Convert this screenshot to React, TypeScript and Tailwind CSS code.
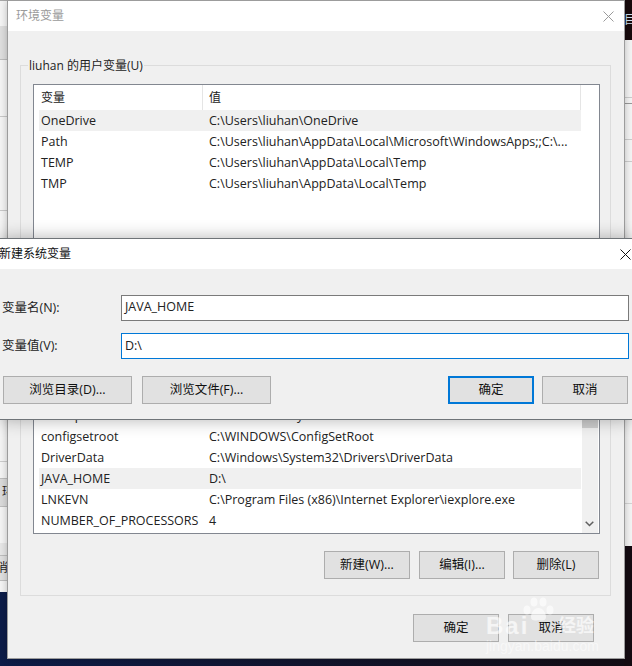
const latin = "font-['Open_Sans','Noto_Sans_CJK_SC',sans-serif]"

const userVars = [
  { name: "OneDrive", value: "C:\\Users\\liuhan\\OneDrive", selected: true },
  { name: "Path", value: "C:\\Users\\liuhan\\AppData\\Local\\Microsoft\\WindowsApps;;C:\\..." },
  { name: "TEMP", value: "C:\\Users\\liuhan\\AppData\\Local\\Temp" },
  { name: "TMP", value: "C:\\Users\\liuhan\\AppData\\Local\\Temp" },
]

const systemVars = [
  { name: "ComSpec", value: "C:\\WINDOWS\\system32\\cmd.exe" },
  { name: "configsetroot", value: "C:\\WINDOWS\\ConfigSetRoot" },
  { name: "DriverData", value: "C:\\Windows\\System32\\Drivers\\DriverData" },
  { name: "JAVA_HOME", value: "D:\\", selected: true },
  { name: "LNKEVN", value: "C:\\Program Files (x86)\\Internet Explorer\\iexplore.exe" },
  { name: "NUMBER_OF_PROCESSORS", value: "4" },
]

function VarRow({ name, value, selected }: { name: string; value: string; selected?: boolean }) {
  return (
    <div className={`flex h-[21px] shrink-0 items-center pt-[1px] ml-[5px] w-[542px] ${selected ? "bg-[#f0f0f0]" : ""}`}>
      <span className="w-[165px] pl-[2px] whitespace-nowrap overflow-hidden">{name}</span>
      <span className="pl-[5px] whitespace-nowrap">{value}</span>
    </div>
  )
}

function WinButton({ label, width, primary }: { label: string; width: string; primary?: boolean }) {
  return (
    <button
      className={`${width} h-[28px] bg-[#e1e1e1] text-[#111] ${
        primary ? "border-2 border-[#0078d7]" : "border border-[#adadad]"
      }`}
    >
      {label}
    </button>
  )
}

function CloseIcon({ className }: { className: string }) {
  return (
    <svg width="11" height="11" viewBox="0 0 11 11" className={className}>
      <path d="M0.5 0.5L10.5 10.5M10.5 0.5L0.5 10.5" stroke="currentColor" fill="none" />
    </svg>
  )
}

function EnvWindow() {
  return (
    <div className="absolute left-[8px] top-[1px] w-[616px] h-[657px] bg-[#f0f0f0] flex flex-col ring-1 ring-[#9c9c9c] shadow-[0_0_8px_rgba(0,0,0,0.3)]">
      <div className="h-[30px] bg-white flex items-center justify-between pl-[8px] pr-[10px] shrink-0">
        <span className="text-[#9a9a9a] text-[12px]">环境变量</span>
        <CloseIcon className="text-[#9a9a9a]" />
      </div>
      <div className="relative mx-[12px] mt-[34px] h-[531px] w-[591px] border border-[#dcdcdc] px-[12px] pt-[18px]">
        <span className="absolute left-[7px] top-[-9px] bg-[#f0f0f0] px-[1px] leading-[18px] text-[12px] text-[#222]">liuhan 的用户变量(U)</span>
        <div className="relative h-[450px] w-[567px] border border-[#828790] bg-white flex flex-col">
          <div className="flex h-[25px] shrink-0 ml-[5px] w-[542px] border-r border-[#e5e5e5] text-[12px]">
            <span className="w-[164px] pl-[2px] border-r border-[#e5e5e5] flex items-center">变量</span>
            <span className="pl-[6px] flex items-center">值</span>
          </div>
          {userVars.map((v) => (
            <VarRow key={v.name} {...v} />
          ))}
          <div className="flex-1" />
          {systemVars.map((v) => (
            <VarRow key={v.name} {...v} />
          ))}
          <div className="h-[2px] shrink-0" />
          {/* scrollbar of the list, only its lower end shows under the dialog */}
          <div className="absolute right-[1px] bottom-0 w-[16px] h-[125px] bg-[#f0f0f0]">
            <div className="h-[20px] bg-[#cdcdcd]" />
            <svg width="9" height="6" viewBox="0 0 9 6" className="absolute left-[3px] bottom-[6px] text-[#606060]">
              <path d="M0.7 0.7L4.5 4.5L8.3 0.7" stroke="currentColor" strokeWidth="1.5" fill="none" />
            </svg>
          </div>
        </div>
        <div className="flex justify-end w-[566px] mt-[17px]">
          <WinButton label="新建(W)..." width="w-[86px] mr-[9px]" />
          <WinButton label="编辑(I)..." width="w-[86px] mr-[8px]" />
          <WinButton label="删除(L)" width="w-[86px]" />
        </div>
      </div>
      <div className="flex justify-end gap-[9px] mt-[18px] mr-[30px]">
        <WinButton label="确定" width="w-[86px]" />
        <WinButton label="取消" width="w-[86px]" />
      </div>
    </div>
  )
}

function NewVarDialog() {
  return (
    <div className="absolute left-0 top-[238px] w-[632px] h-[182px] bg-[#f0f0f0] flex flex-col border-y border-[#6f7478] shadow-[0_0_16px_rgba(0,0,0,0.3)]">
      <div className="h-[30px] bg-white flex items-center justify-between pr-[1px] shrink-0">
        <span className="text-[#111] text-[12px] -ml-[1px]">新建系统变量</span>
        <CloseIcon className="text-[#111]" />
      </div>
      <div className="flex items-center h-[26px] mt-[26px]">
        <label className="w-[121px] pl-[2px]">变量名(N):</label>
        <div className="w-[508px] h-[26px] border border-[#7a7a7a] bg-white flex items-center pl-[3px] pb-[1px]">JAVA_HOME</div>
      </div>
      <div className="flex items-center h-[26px] mt-[12px]">
        <label className="w-[121px] pl-[2px]">变量值(V):</label>
        <div className="w-[508px] h-[26px] border border-[#0078d7] bg-white flex items-center pl-[3px]">D:\</div>
      </div>
      <div className="flex mt-[17px] pl-[3px] pr-[4px]">
        <div className="flex gap-[10px]">
          <WinButton label="浏览目录(D)..." width="w-[129px]" />
          <WinButton label="浏览文件(F)..." width="w-[129px]" />
        </div>
        <div className="flex gap-[8px] ml-auto">
          <WinButton label="确定" width="w-[86px]" primary />
          <WinButton label="取消" width="w-[86px]" />
        </div>
      </div>
    </div>
  )
}

// what shows of the other windows left and right of the dialogs
function DesktopBehind() {
  return (
    <>
      <div className="absolute left-0 top-[592px] w-[632px] h-[74px] bg-gradient-to-r from-[#0c1c48] to-[#130c14]" />
      <div className="absolute right-0 top-[546px] w-[8px] h-[120px] bg-[#140b12]" />
      <div className="absolute left-[140px] top-0 w-[492px] h-[1px] bg-[#2a1c1e]" />
      <div className="absolute left-0 top-0 w-[140px] h-[1px] bg-[#a8a8a8]" />
      <div className="absolute left-[180px] top-0 w-[26px] h-[1px] bg-[#3f9a6a]" />
      <div className="absolute left-[255px] top-0 w-[30px] h-[1px] bg-[#6f84a0]" />
      <div className="absolute right-0 top-0 w-[8px] h-[40px] bg-[#170a0c]" />
      <div className="absolute right-0 top-[13px] w-[8px] text-[12px] leading-[14px] text-[#cfe2f2] overflow-hidden">目</div>

      <div className="absolute left-0 top-[26px] w-[8px] h-[34px] bg-[#dedede] border-b border-[#bdbdbd]" />
      <div className="absolute left-0 top-[116px] w-[8px] h-[1px] bg-[#c8c8c8]" />
      <div className="absolute left-0 top-[210px] w-[8px] h-[1px] bg-[#c8c8c8]" />
      <div className="absolute left-0 top-[461px] w-[8px] h-[1px] bg-[#cccccc]" />
      <div className="absolute left-0 top-[478px] w-[8px] h-[29px] bg-[#dadada] border-y border-[#bdbdbd] overflow-hidden">
        <span className="block ml-[2px] text-[12px] leading-[26px] text-[#222]">环</span>
      </div>
      <div className="absolute left-0 top-[543px] w-[8px] h-[12px] bg-[#e6e6e6]" />
      <div className="absolute left-0 top-[555px] w-[8px] h-[26px] bg-[#e0e0e0] border-y border-[#bdbdbd] overflow-hidden">
        <span className="block -ml-[4px] text-[12px] leading-[24px] text-[#222]">消</span>
      </div>

      <div className="absolute right-0 top-[97px] w-[8px] h-[1px] bg-[#cccccc]" />
      <div className="absolute right-0 top-[103px] w-[8px] h-[1px] bg-[#999999]" />
      <div className="absolute right-0 top-[139px] w-[8px] h-[1px] bg-[#cccccc]" />
      <div className="absolute right-0 top-[161px] w-[8px] h-[1px] bg-[#cccccc]" />
      <div className="absolute right-0 top-[503px] w-[8px] h-[1px] bg-[#d4d4d4]" />
    </>
  )
}

function Watermark() {
  return (
    <>
      <svg width="34" height="26" viewBox="0 0 34 26" className="absolute left-[522px] top-[597px] text-white/60">
        <g fill="currentColor">
          <ellipse cx="5" cy="13" rx="3.5" ry="4.5" />
          <ellipse cx="12" cy="5" rx="3.5" ry="4.5" />
          <ellipse cx="21" cy="5" rx="3.5" ry="4.5" />
          <ellipse cx="28" cy="13" rx="3.5" ry="4.5" />
          <path d="M16.5 11C12 11 9 16 9 20C9 24 13 24 16.5 23C20 24 24 24 24 20C24 16 21 11 16.5 11Z" />
        </g>
      </svg>
      <div className="absolute left-[486px] top-[614px] text-white/65 font-bold text-[24px] leading-[24px] tracking-[2px] font-['Liberation_Sans',sans-serif]">Bai</div>
      <div className="absolute left-[558px] top-[615px] text-white/65 text-[18px] leading-[20px] font-bold">经验</div>
      <div className="absolute left-[486px] top-[639px] text-white/50 text-[14px] leading-[14px] font-['Liberation_Sans',sans-serif]">jingyan.baidu.com</div>
    </>
  )
}

export default function App() {
  return (
    <div className={`relative w-[632px] h-[666px] overflow-hidden bg-[#f4f4f4] text-[12.5px] text-[#222] ${latin}`}>
      <DesktopBehind />
      <EnvWindow />
      <NewVarDialog />
      <Watermark />
    </div>
  )
}
